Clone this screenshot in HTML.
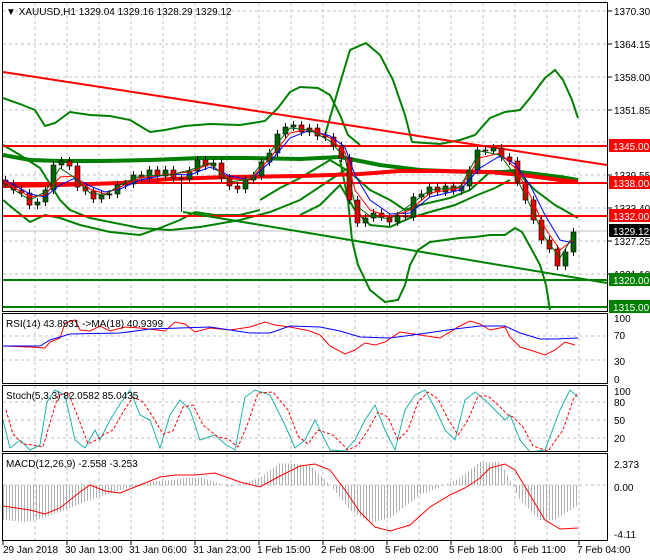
<!DOCTYPE html>
<html><head><meta charset="utf-8"><style>
html,body{margin:0;padding:0;background:#fff;}
svg{display:block;font-family:"Liberation Sans",sans-serif;}
</style></head><body>
<svg width="650" height="560" viewBox="0 0 650 560" xmlns="http://www.w3.org/2000/svg">
<defs>
<pattern id="hp" width="3" height="10" patternUnits="userSpaceOnUse"><rect x="0" y="0" width="1" height="10" fill="#b0b0b0"/></pattern>
</defs>
<rect width="650" height="560" fill="#fff"/>
<!-- grid -->
<g stroke="#c0c0c0" stroke-dasharray="3,3" stroke-width="1" fill="none">
<path d="M35 3V311M67 3V311M99 3V311M131 3V311M163 3V311M195 3V311M227 3V311M259 3V311M291 3V311M323 3V311M355 3V311M387 3V311M419 3V311M451 3V311M483 3V311M515 3V311M547 3V311M579 3V311"/>
<path d="M35 314V383M67 314V383M99 314V383M131 314V383M163 314V383M195 314V383M227 314V383M259 314V383M291 314V383M323 314V383M355 314V383M387 314V383M419 314V383M451 314V383M483 314V383M515 314V383M547 314V383M579 314V383"/>
<path d="M35 386V451M67 386V451M99 386V451M131 386V451M163 386V451M195 386V451M227 386V451M259 386V451M291 386V451M323 386V451M355 386V451M387 386V451M419 386V451M451 386V451M483 386V451M515 386V451M547 386V451M579 386V451"/>
<path d="M35 454V540M67 454V540M99 454V540M131 454V540M163 454V540M195 454V540M227 454V540M259 454V540M291 454V540M323 454V540M355 454V540M387 454V540M419 454V540M451 454V540M483 454V540M515 454V540M547 454V540M579 454V540"/>
<path d="M3 11H607M3 44H607M3 77H607M3 110H607M3 142H607M3 175H607M3 208H607M3 241H607M3 274H607M3 336H607M3 360H607M3 402H607M3 420H607M3 438H607M3 485H607"/>
</g>
<line x1="3" y1="231" x2="607" y2="231" stroke="#c0c0c0"/>
<!-- bands -->
<g fill="none" stroke="#008000" stroke-width="2">
<polyline points="3,98 20,104 35,110 45,126 55,123 70,112 90,115 110,116 130,120 150,132 165,130 185,126 210,124 240,125 265,121 278,108 290,92 300,87 318,88 330,95 340,115 348,135 360,145"/>
<polyline points="325,135 338,90 350,50 366,43 380,55 393,80 405,115 412,142"/>
<polyline points="412,142 440,144 460,140 475,135 490,118 505,112 520,110 530,98 545,78 555,70 563,80 572,100 578,118"/>
<polyline points="3,145 20,155 40,168 60,200 70,210 90,218 110,222 140,228 170,230 200,227 240,220 270,212 300,200 330,180 345,170"/>
<polyline points="340,160 348,200 352,240 358,265 370,290 385,302 398,300 405,285 410,265 418,250 430,242 445,240 460,238 475,237 490,235 505,235 515,228 522,232 532,250 540,265 546,285 550,310"/>
<polyline points="3,200 15,210 30,222 45,215 60,218 80,225 110,232 140,235 160,228 180,220 195,212 215,215 240,215 260,210"/>
<polyline points="260,200 280,188 300,178 330,160 350,172 370,190 390,200 405,210 420,205 450,198 470,190 490,172 515,170 535,190 555,205 578,218"/>
<polyline points="300,215 320,205 340,185 355,210 370,225 390,227 410,218 430,212 455,205 475,196 495,188 510,180"/>
<polyline stroke-width="4" points="3,155 30,160 60,161 100,161 150,160 200,158 250,158 300,159 340,157 380,165 420,170 470,172 520,172 560,177 578,180"/>
</g>
<polyline fill="none" stroke="#ff0000" stroke-width="4" points="3,186 60,185 120,183 170,179 230,177 300,176 360,174 400,171 440,171 490,172 530,176 560,180 578,182"/>
<g stroke-width="2">
<line x1="3" y1="146" x2="607" y2="146" stroke="#ff0000"/>
<line x1="3" y1="183" x2="607" y2="183" stroke="#ff0000"/>
<line x1="3" y1="216" x2="607" y2="216" stroke="#ff0000"/>
<line x1="3" y1="280" x2="607" y2="280" stroke="#008000"/>
<line x1="3" y1="307" x2="607" y2="307" stroke="#008000"/>
<line x1="3" y1="72" x2="607" y2="165" stroke="#ff0000"/>
<line x1="183" y1="212" x2="607" y2="283" stroke="#008000"/>
</g>
<!-- wicks -->
<path fill="none" stroke="#000" stroke-width="1" d="M5.5 176V188M13.5 180V194M21.5 186V197M29.5 189V209M37.5 198V209M45.5 186V206M53.5 161V194M61.5 157V169M69.5 157V170M77.5 162V191M85.5 183V195M93.5 187V203M101.5 191V203M109.5 190V199M117.5 181V198M125.5 180V189M133.5 171V188M141.5 171V182M149.5 166V182M157.5 166V180M165.5 166V180M173.5 166V182M181.5 174V212M189.5 167V183M197.5 156V175M205.5 156V170M213.5 159V170M221.5 159V182M229.5 174V190M237.5 182V193M245.5 176V193M253.5 172V184M261.5 158V180M269.5 149V166M277.5 130V157M285.5 123V138M293.5 121V131M301.5 121V136M309.5 124V136M317.5 124V140M325.5 132V141M333.5 133V150M341.5 142V162M349.5 154V204M357.5 196V227M365.5 214V227M373.5 209V222M381.5 209V221M389.5 213V226M397.5 212V226M405.5 212V221M413.5 193V221M421.5 190V201M429.5 183V198M437.5 183V196M445.5 182V196M453.5 182V195M461.5 182V195M469.5 166V190M477.5 146V174M485.5 146V155M493.5 144V155M501.5 144V161M509.5 153V165M517.5 157V186M525.5 178V204M533.5 196V224M541.5 216V244M549.5 236V253M557.5 245V270M565.5 248V270M573.5 228V256"/>
<!-- red bodies -->
<g fill="#e00000" stroke="#000" stroke-width="0.6">
<rect x="3" y="180" width="5" height="4"/><rect x="11" y="184" width="5" height="6"/><rect x="19" y="190" width="5" height="3"/><rect x="27" y="193" width="5" height="12"/>
<rect x="67" y="161" width="5" height="5"/><rect x="75" y="166" width="5" height="21"/><rect x="83" y="187" width="5" height="4"/><rect x="91" y="191" width="5" height="8"/>
<rect x="139" y="175" width="5" height="3"/><rect x="155" y="170" width="5" height="6"/><rect x="171" y="170" width="5" height="8"/><rect x="179" y="178" width="5" height="1"/>
<rect x="203" y="160" width="5" height="6"/><rect x="219" y="163" width="5" height="15"/><rect x="227" y="178" width="5" height="8"/><rect x="235" y="186" width="5" height="3"/>
<rect x="299" y="125" width="5" height="7"/><rect x="315" y="128" width="5" height="8"/><rect x="323" y="136" width="5" height="1"/><rect x="331" y="137" width="5" height="9"/><rect x="339" y="146" width="5" height="12"/><rect x="347" y="158" width="5" height="42"/><rect x="355" y="200" width="5" height="23"/>
<rect x="379" y="213" width="5" height="4"/><rect x="387" y="217" width="5" height="5"/><rect x="403" y="216" width="5" height="1"/><rect x="435" y="187" width="5" height="5"/><rect x="451" y="186" width="5" height="5"/>
<rect x="483" y="150" width="5" height="1"/><rect x="499" y="148" width="5" height="9"/><rect x="507" y="157" width="5" height="4"/><rect x="515" y="161" width="5" height="21"/><rect x="523" y="182" width="5" height="18"/><rect x="531" y="200" width="5" height="20"/><rect x="539" y="220" width="5" height="20"/><rect x="547" y="240" width="5" height="9"/><rect x="555" y="249" width="5" height="17"/>
</g>
<!-- green bodies -->
<g fill="#006400" stroke="#000" stroke-width="0.6">
<rect x="35" y="202" width="5" height="3"/><rect x="43" y="190" width="5" height="12"/><rect x="51" y="165" width="5" height="25"/><rect x="59" y="161" width="5" height="4"/>
<rect x="99" y="195" width="5" height="4"/><rect x="107" y="194" width="5" height="1"/><rect x="115" y="185" width="5" height="9"/><rect x="123" y="184" width="5" height="1"/><rect x="131" y="175" width="5" height="9"/><rect x="147" y="170" width="5" height="8"/><rect x="163" y="170" width="5" height="6"/>
<rect x="187" y="171" width="5" height="8"/><rect x="195" y="160" width="5" height="11"/><rect x="211" y="163" width="5" height="3"/>
<rect x="243" y="180" width="5" height="9"/><rect x="251" y="176" width="5" height="4"/><rect x="259" y="162" width="5" height="14"/><rect x="267" y="153" width="5" height="9"/><rect x="275" y="134" width="5" height="19"/><rect x="283" y="127" width="5" height="7"/><rect x="291" y="125" width="5" height="2"/><rect x="307" y="128" width="5" height="4"/>
<rect x="363" y="218" width="5" height="5"/><rect x="371" y="213" width="5" height="5"/><rect x="395" y="216" width="5" height="6"/><rect x="411" y="197" width="5" height="20"/><rect x="419" y="194" width="5" height="3"/><rect x="427" y="187" width="5" height="7"/><rect x="443" y="186" width="5" height="6"/><rect x="459" y="186" width="5" height="5"/><rect x="467" y="170" width="5" height="16"/><rect x="475" y="150" width="5" height="20"/><rect x="491" y="148" width="5" height="3"/>
<rect x="563" y="252" width="5" height="14"/><rect x="571" y="232" width="5" height="20"/>
</g>
<!-- MAs -->
<g fill="none" stroke-width="1">
<polyline stroke="#0000ff" points="5,180 30,194 45,197 60,185 75,178 90,186 105,192 120,189 140,180 170,174 190,175 210,167 230,176 250,180 270,162 290,138 310,130 330,136 345,147 355,175 370,200 390,214 410,213 430,197 460,190 480,168 500,156 515,164 530,185 545,215 560,240 573,243"/>
<polyline stroke="#ff0000" points="5,182 30,197 45,195 60,177 75,176 90,189 105,194 120,187 140,178 170,174 190,172 210,164 230,179 250,180 270,158 290,133 310,129 330,138 345,152 355,190 370,210 390,217 410,210 430,193 460,188 480,158 500,153 515,168 530,195 545,228 560,250 573,240"/>
<polyline stroke="#006400" points="5,184 30,200 45,192 60,168 75,178 90,193 105,195 120,185 140,176 170,175 190,170 210,163 230,182 250,179 270,152 290,128 310,130 330,141 345,158 355,205 370,216 390,219 410,205 430,190 460,187 480,151 500,155 515,175 530,205 545,238 560,258 573,236"/>
</g>
<!-- RSI -->
<polyline fill="none" stroke="#ff0000" points="3,346 30,347 45,348 50,342 60,338 65,323 75,320 80,330 90,331 100,326 110,331 125,327 140,328 165,331 175,322 185,324 195,332 210,328 230,330 250,327 265,322 275,325 290,327 310,331 320,335 330,346 345,354 355,350 365,343 375,345 385,342 400,332 420,335 440,338 460,326 470,321 480,324 490,330 505,327 510,337 520,347 530,350 545,355 555,350 565,342 575,345"/>
<polyline fill="none" stroke="#0000ff" points="3,346 40,346 50,340 70,334 120,333 150,329 210,327 250,333 270,333 290,326 320,327 340,331 360,337 390,338 420,334 455,329 480,326 505,326 520,333 540,339 555,339 578,338"/>
<!-- Stoch -->
<polyline fill="none" stroke="#20b2aa" points="3,420 10,448 20,440 30,450 40,445 47,402 55,390 65,395 75,440 85,448 95,430 100,440 110,420 120,404 130,390 140,415 150,420 160,448 170,415 180,400 190,410 200,440 215,435 225,444 235,450 245,397 255,390 270,395 285,425 295,448 305,440 315,420 330,450 345,451 355,440 365,420 375,405 385,430 395,450 405,410 415,395 425,390 435,408 445,430 455,440 465,400 475,392 485,400 495,410 505,420 510,415 520,440 530,452 545,450 560,410 570,390 578,397"/>
<polyline fill="none" stroke="#ff0000" stroke-dasharray="3,2" points="6,410 13,434 23,444 33,445 43,447 50,423 58,396 68,392 78,417 88,444 98,439 103,435 113,430 123,412 133,397 143,402 153,417 163,434 173,431 183,407 193,405 203,425 218,437 228,439 238,447 248,423 258,393 273,392 288,410 298,436 308,444 318,430 333,435 348,450 358,445 368,430 378,412 388,417 398,440 408,430 418,402 428,392 438,399 448,419 458,435 468,420 478,396 488,396 498,405 508,415 513,417 523,427 533,446 548,451 563,430 573,400 578,393"/>
<!-- MACD -->
<polygon fill="url(#hp)" points="3,485 3,520 30,522 60,512 90,500 120,490 150,482 170,480 200,477 230,487 260,478 280,463 310,465 330,485 350,510 370,523 390,518 420,495 440,487 460,478 480,462 500,462 510,480 520,500 540,520 555,520 578,505 578,485"/>
<polyline fill="none" stroke="#ff0000" points="3,506 30,510 45,514 60,508 80,492 90,485 105,491 120,493 140,485 160,477 175,475 195,475 215,473 240,482 260,487 280,476 300,466 315,464 330,470 345,490 360,512 375,527 390,531 410,525 430,507 450,495 465,488 480,478 490,468 505,464 515,470 530,495 545,520 560,529 578,528"/>
<!-- frames -->
<g fill="none" stroke="#000" stroke-width="1">
<rect x="2.5" y="2.5" width="605" height="309"/>
<rect x="2.5" y="313.5" width="605" height="70"/>
<rect x="2.5" y="385.5" width="605" height="66"/>
<rect x="2.5" y="453.5" width="605" height="87"/>
<path d="M608 11H612M608 44H612M608 77H612M608 110H612M608 175H612M608 208H612M608 241H612M608 274H612M3 541V545M67 541V545M131 541V545M195 541V545M259 541V545M323 541V545M387 541V545M451 541V545M515 541V545M579 541V545"/>
</g>
<g font-size="10" fill="#000">
<text x="6" y="15">▼ XAUUSD,H1  1329.04 1329.16 1328.29 1329.12</text>
<text x="6" y="327">RSI(14) 43.8931  -&gt;MA(18) 40.9399</text>
<text x="6" y="399">Stoch(5,3,3) 82.0582 85.0435</text>
<text x="6" y="467">MACD(12,26,9) -2.558 -3.253</text>
<text x="614" y="15">1370.30</text><text x="614" y="48">1364.15</text><text x="614" y="81">1358.00</text><text x="614" y="114">1351.85</text>
<text x="614" y="179">1339.55</text><text x="614" y="212">1333.40</text><text x="614" y="245">1327.25</text><text x="614" y="278">1321.10</text>
<text x="614" y="322">100</text><text x="614" y="339">70</text><text x="614" y="365">30</text><text x="614" y="383">0</text>
<text x="614" y="395">100</text><text x="614" y="406">80</text><text x="614" y="424">50</text><text x="614" y="442">20</text>
<text x="614" y="468">2.373</text><text x="614" y="491">0.00</text><text x="614" y="538">-4.11</text>
<text x="3" y="553">29 Jan 2018</text><text x="65" y="553">30 Jan 13:00</text><text x="129" y="553">31 Jan 06:00</text><text x="193" y="553">31 Jan 23:00</text><text x="257" y="553">1 Feb 15:00</text><text x="321" y="553">2 Feb 08:00</text><text x="385" y="553">5 Feb 02:00</text><text x="449" y="553">5 Feb 18:00</text><text x="513" y="553">6 Feb 11:00</text><text x="577" y="553">7 Feb 04:00</text>
</g>
<g font-size="10">
<rect x="609" y="139" width="41" height="13" fill="#ff0000"/><text x="613" y="150" fill="#fff">1345.00</text>
<rect x="609" y="176" width="41" height="13" fill="#ff0000"/><text x="613" y="187" fill="#fff">1338.00</text>
<rect x="609" y="209" width="41" height="13" fill="#ff0000"/><text x="613" y="220" fill="#fff">1332.00</text>
<rect x="609" y="224" width="41" height="13" fill="#000"/><text x="613" y="235" fill="#fff">1329.12</text>
<rect x="609" y="273" width="41" height="13" fill="#008000"/><text x="613" y="284" fill="#fff">1320.00</text>
<rect x="609" y="300" width="41" height="13" fill="#008000"/><text x="613" y="311" fill="#fff">1315.00</text>
</g>
</svg>
</body></html>
